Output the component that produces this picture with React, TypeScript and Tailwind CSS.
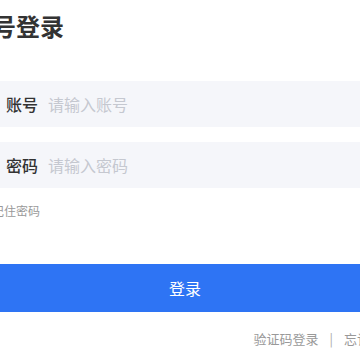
import React, { useState } from 'react';

const font = { fontFamily: '"Noto Sans CJK SC", "Noto Sans", sans-serif' };

const Field: React.FC<{ label: string; placeholder: string; type?: string }> = ({ label, placeholder, type = 'text' }) => (
  <div className="flex items-center h-[46px] bg-[#f5f6fa] pl-[38px] pr-4">
    <span className="text-[16px] leading-[22px] font-medium text-[#333333] shrink-0">{label}</span>
    <input
      type={type}
      placeholder={placeholder}
      className="ml-[10px] flex-1 bg-transparent outline-none text-[16px] leading-[22px] text-[#333333] placeholder:text-[#c5c8d0]"
    />
  </div>
);

export default function App() {
  const [remember, setRemember] = useState(false);

  return (
    <div className="w-[360px] h-[360px] overflow-hidden bg-white" style={font}>
      <div className="ml-[-32px] w-[434px] pt-[10px]">
        <h1 className="text-[24px] leading-[32px] font-semibold text-[#333333]">账号登录</h1>

        <div className="mt-[39px] flex flex-col gap-[15px]">
          <Field label="账号" placeholder="请输入账号" />
          <Field label="密码" placeholder="请输入密码" type="password" />
        </div>

        <label className="mt-[13px] flex items-center gap-[8px] h-[20px] cursor-pointer">
          <input
            type="checkbox"
            checked={remember}
            onChange={() => setRemember(!remember)}
            className="w-[16px] h-[16px]"
          />
          <span className="text-[12px] leading-[20px] text-[#999999]">记住密码</span>
        </label>

        <button className="mt-[43px] w-full h-[48px] bg-[#2e74f4] text-white text-[16px] leading-[22px]">
          登录
        </button>

        <div className="mt-[17px] flex justify-end items-center pr-[6px] text-[13px] leading-[20px] text-[#999999]">
          <span>验证码登录</span>
          <span className="mx-[11px] text-[#aaaaaa]">|</span>
          <span>忘记密码</span>
        </div>
      </div>
    </div>
  );
}
